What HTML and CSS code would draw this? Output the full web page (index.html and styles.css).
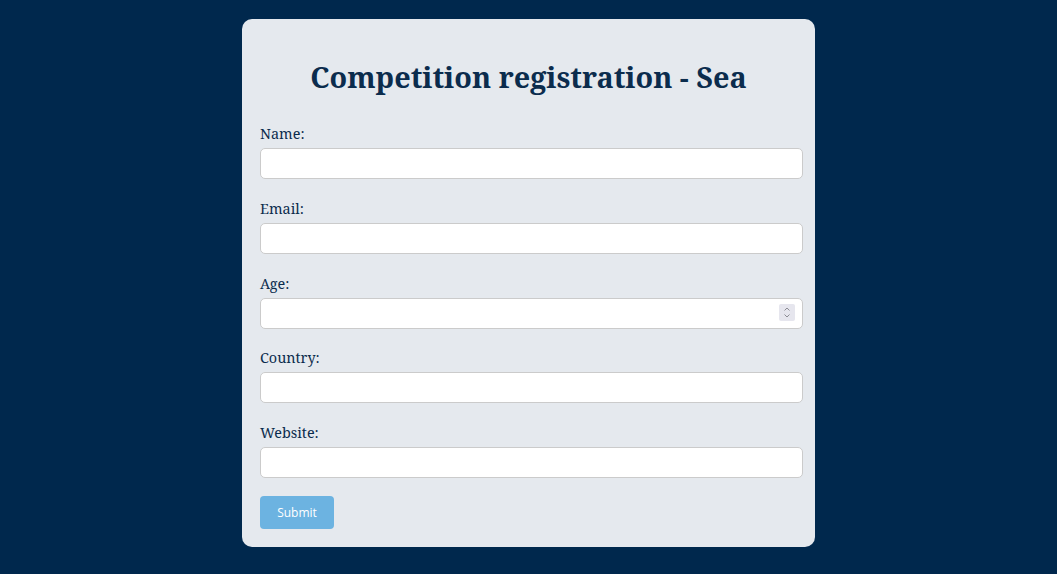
FILE: index.html
```html
<!DOCTYPE html>
<html lang="en">
<head>
<meta charset="utf-8">
<title>Competition registration - Sea</title>
<link rel="stylesheet" href="styles.css">
</head>
<body>
<main class="card">
  <h1 class="title">Competition registration - Sea</h1>
  <form class="form">
    <label class="label" for="name">Name:</label>
    <input class="field" type="text" id="name">
    <label class="label" for="email">Email:</label>
    <input class="field" type="email" id="email">
    <label class="label" for="age">Age:</label>
    <div class="number-wrap">
      <input class="field field-number" type="number" id="age">
      <span class="spin" aria-hidden="true">
        <svg width="16" height="17" viewBox="0 0 16 17">
          <path d="M5.5 6.5 L8 4 L10.5 6.5" fill="none" stroke="#8c8c94" stroke-width="1"/>
          <path d="M5.5 10.5 L8 13 L10.5 10.5" fill="none" stroke="#8c8c94" stroke-width="1"/>
        </svg>
      </span>
    </div>
    <label class="label" for="country">Country:</label>
    <input class="field" type="text" id="country">
    <label class="label" for="website">Website:</label>
    <input class="field field-last" type="url" id="website">
    <button class="submit" type="submit">Submit</button>
  </form>
</main>
</body>
</html>
```

FILE: styles.css
```css
html, body {
  margin: 0;
  padding: 0;
}
body {
  background: #00284d;
  font-family: "Noto Serif", "DejaVu Serif", serif;
  color: #0b2c4d;
  padding-top: 19px;
  min-height: 574px;
  box-sizing: border-box;
}
.card {
  width: 573px;
  box-sizing: border-box;
  margin: 0 auto;
  background: #e5e9ee;
  border-radius: 10px;
  padding: 18px 18px 18px;
}
.title {
  margin: 20px 0 26px;
  text-align: center;
  font-size: 28.8px;
  line-height: 40px;
  font-weight: 700;
  color: #0b2c4d;
}
.form {
  display: flex;
  flex-direction: column;
  align-items: flex-start;
}
.label {
  display: block;
  font-size: 14.4px;
  line-height: 20px;
  padding-top: 1px;
  margin-bottom: 4px;
}
.field {
  display: block;
  box-sizing: content-box;
  width: 100%;
  height: 25px;
  margin: 0 0 18.75px;
  padding: 2px;
  border: 1px solid #cbcbcb;
  border-radius: 5px;
  background: #fff;
  font-size: 14px;
}
.number-wrap {
  position: relative;
  width: 100%;
}
.field-number {
  -moz-appearance: textfield;
}
.field-number::-webkit-inner-spin-button,
.field-number::-webkit-outer-spin-button {
  -webkit-appearance: none;
  margin: 0;
}
.spin {
  position: absolute;
  top: 6px;
  right: 2px;
  width: 16px;
  height: 17px;
  background: #e6e6ee;
  border-radius: 2px;
  display: flex;
}
.field-last {
  margin-bottom: 17.75px;
}
.submit {
  width: 74px;
  height: 33px;
  border: none;
  border-radius: 4px;
  background: #6cb3e1;
  color: #fff;
  font-family: "Open Sans", sans-serif;
  font-size: 12px;
}
```
